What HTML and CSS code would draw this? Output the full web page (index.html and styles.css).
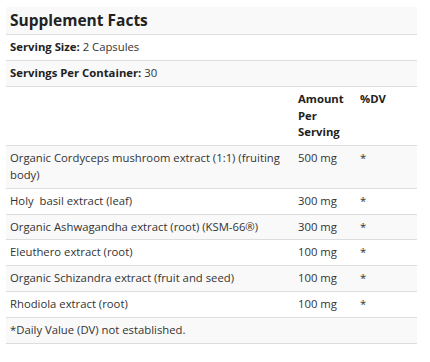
FILE: index.html
```html
<!DOCTYPE html>
<html>
<head>
<meta charset="utf-8">
<link rel="stylesheet" href="styles.css">
</head>
<body>
<table class="facts">
  <colgroup>
    <col class="c-name">
    <col class="c-amt">
    <col class="c-dv">
  </colgroup>
  <tbody>
    <tr class="odd"><td colspan="3" class="title">Supplement Facts</td></tr>
    <tr><td colspan="3"><b>Serving Size:</b> 2 Capsules</td></tr>
    <tr class="odd"><td colspan="3"><b>Servings Per Container:</b> 30</td></tr>
    <tr><td></td><td class="head">Amount Per Serving</td><td class="head">%DV</td></tr>
    <tr class="odd"><td>Organic Cordyceps mushroom extract (1:1) (fruiting body)</td><td>500 mg</td><td>*</td></tr>
    <tr><td>Holy&nbsp; basil extract (leaf)</td><td>300 mg</td><td>*</td></tr>
    <tr class="odd"><td>Organic Ashwagandha extract (root) (KSM-66®)</td><td>300 mg</td><td>*</td></tr>
    <tr><td>Eleuthero extract (root)</td><td>100 mg</td><td>*</td></tr>
    <tr class="odd"><td>Organic Schizandra extract (fruit and seed)</td><td>100 mg</td><td>*</td></tr>
    <tr><td>Rhodiola extract (root)</td><td>100 mg</td><td>*</td></tr>
    <tr class="odd"><td colspan="3">*Daily Value (DV) not established.</td></tr>
  </tbody>
</table>
</body>
</html>
```
FILE: styles.css
```css
html, body {
  margin: 0;
  background: #fff;
}
body {
  padding: 7px 13px 0 6px;
  font-family: "Open Sans", "Liberation Sans", sans-serif;
  font-size: 11.3px;
  line-height: 16.8px;
  color: #333;
}
.facts {
  width: 411px;
  border-collapse: collapse;
  table-layout: fixed;
}
.c-name { width: 288px; }
.c-amt { width: 62px; }
.c-dv { width: 61px; }
.facts td {
  padding: 4px;
  border-bottom: 1px solid #ddd;
  vertical-align: top;
  text-align: left;
}
.facts tr.odd td {
  background: #f9f9f9;
}
.facts b, .facts .head {
  font-weight: 700;
  color: #222;
}
.facts .title {
  font-size: 15.5px;
  line-height: 19.2px;
  font-weight: 700;
  color: #222;
}
```
